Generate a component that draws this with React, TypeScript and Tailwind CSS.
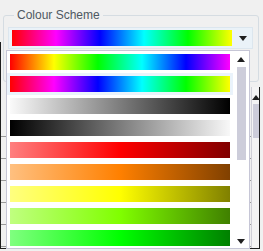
import React from "react";

// Gradient swatches shown in the colour-scheme dropdown, top to bottom.
const SCHEMES = [
  "bg-[linear-gradient(to_right,#ff0000,#ffff00,#00ff00,#00ffff,#0000ff,#ff00ff)]",
  "bg-[linear-gradient(to_right,#ff0000,#ff00ff,#0000ff,#00ffff,#00ff00,#ffff00)]",
  "bg-[linear-gradient(to_right,#fafafa,#000000)]",
  "bg-[linear-gradient(to_right,#000000,#f8f8f8)]",
  "bg-[linear-gradient(to_right,#ff8080,#ff0000,#800000)]",
  "bg-[linear-gradient(to_right,#ffc080,#ff8000,#804000)]",
  "bg-[linear-gradient(to_right,#ffff80,#ffff00,#808000)]",
  "bg-[linear-gradient(to_right,#c0ff80,#80ff00,#408000)]",
  "bg-[linear-gradient(to_right,#80ff80,#00ff00,#008000)]",
];

const SELECTED = 1;

function Arrow({ up = false }: { up?: boolean }) {
  return (
    <svg width="8" height="5" viewBox="0 0 8 5" aria-hidden="true">
      <polygon points={up ? "0,5 8,5 4,0" : "0,0 8,0 4,5"} fill="#1f1f1f" />
    </svg>
  );
}

export default function App() {
  return (
    <div
      className="relative flex w-[263px] h-[251px] overflow-hidden bg-[#f0f0f0] text-[12px]"
      style={{ fontFamily: '"Liberation Sans", Arial, sans-serif' }}
    >
      {/* window edge */}
      <div className="mt-[42px] h-[207px] w-[1px] bg-[#1e1e1e]" />

      <div className="flex flex-col w-[259px] pt-[8px]">
        {/* Group box */}
        <fieldset className="ml-[2px] mr-[1px] h-[74px] rounded-[3px] border border-[#d5dce2] pl-[4px] pr-[5px]">
          <legend className="ml-[6px] px-[3px] leading-[14px] text-[#4e5862]">Colour Scheme</legend>
          <div className="mt-[5px] flex h-[22px] items-center border border-[#dce6ee] bg-[#eaf2f8] pl-[3px]">
            <div className={`h-[16px] w-[220px] ${SCHEMES[SELECTED]}`} />
            <div className="flex flex-1 justify-center pl-[2px]">
              <Arrow />
            </div>
          </div>
        </fieldset>

        {/* Grid that sits underneath the open dropdown */}
        <div className="mt-[5px] flex h-[162px] border-b border-r border-[#1e1e1e]">
          <div className="flex flex-1 flex-col pt-[28px]">
            {[0, 1, 2, 3, 4, 5].map((i) => (
              <div key={i} className="h-[22px] border-b border-[#9a9a9a]" />
            ))}
          </div>
          <div className="flex w-[8px] flex-col items-center border-l border-[#d0d0d8] bg-[#f4f4f4] pt-[8px]">
            <Arrow up />
            <div className="mt-[4px] h-[34px] w-[6px] bg-[#cdcdda]" />
          </div>
        </div>
      </div>

      {/* Open dropdown list */}
      <div className="absolute left-[6px] top-[50px] flex h-[199px] w-[244px] border border-[#c6c6d6] bg-white">
        <div className="flex w-[226px] flex-col">
          {SCHEMES.map((cls, i) => (
            <div
              key={i}
              className={`h-[22px] shrink-0 px-[3px] py-[3px] ${i === SELECTED ? "bg-[#eaf3fb]" : ""}`}
            >
              <div className={`h-[16px] w-[220px] ${cls}`} />
            </div>
          ))}
        </div>
        <div className="flex w-[16px] flex-col items-center">
          <div className="mt-[6px] flex h-[5px] items-center">
            <Arrow up />
          </div>
          <div className="mt-[5px] h-[93px] w-[9px] bg-[#cdcdda]" />
          <div className="flex-1" />
          <div className="mb-[4px] flex h-[5px] items-center">
            <Arrow />
          </div>
        </div>
      </div>
    </div>
  );
}
